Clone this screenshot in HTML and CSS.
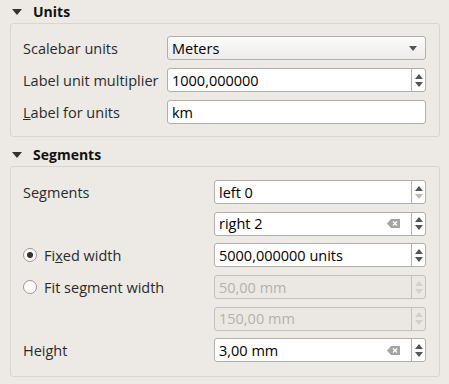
FILE: index.html
```html
<!DOCTYPE html>
<html lang="en">
<head>
<meta charset="UTF-8">
<title>Scalebar properties</title>
<link rel="stylesheet" href="styles.css">
</head>
<body>

<div class="section">
    <div class="sec-head"><span class="tri"></span>Units</div>
    <div class="box units">
        <div class="lbl">Scalebar units</div>
        <div class="field combo"><span class="val">Meters</span><span class="drop"></span></div>

        <div class="lbl">Label unit multiplier</div>
        <div class="field spin"><span class="val">1000,000000</span>
            <span class="arrows"><i class="up"></i><i class="down"></i></span></div>

        <div class="lbl"><u>L</u>abel for units</div>
        <div class="field"><span class="val">km</span></div>
    </div>
</div>

<div class="section">
    <div class="sec-head"><span class="tri"></span>Segments</div>
    <div class="box segs">
        <div class="lbl">Segments</div>
        <div class="field spin"><span class="val">left 0</span>
            <span class="arrows"><i class="up"></i><i class="down off"></i></span></div>

        <div class="lbl"></div>
        <div class="field spin"><span class="val">right 2</span>
            <svg class="clear" width="13" height="11" viewBox="0 0 13 11"><path d="M0 5.5 L4 1 H13 V10 H4 Z" fill="#a4a4a4"/><path d="M6 3.5 L10 7.5 M10 3.5 L6 7.5" stroke="#fff" stroke-width="1.3"/></svg>
            <span class="arrows"><i class="up"></i><i class="down"></i></span></div>

        <div class="lbl"><span class="radio on"></span>Fi<u>x</u>ed width</div>
        <div class="field spin"><span class="val">5000,000000 units</span>
            <span class="arrows"><i class="up"></i><i class="down"></i></span></div>

        <div class="lbl"><span class="radio"></span>Fit segment width</div>
        <div class="field spin disabled"><span class="val">50,00 mm</span>
            <span class="arrows"><i class="up"></i><i class="down"></i></span></div>

        <div class="lbl"></div>
        <div class="field spin disabled"><span class="val">150,00 mm</span>
            <span class="arrows"><i class="up"></i><i class="down"></i></span></div>

        <div class="lbl">Height</div>
        <div class="field spin"><span class="val">3,00 mm</span>
            <svg class="clear" width="13" height="11" viewBox="0 0 13 11"><path d="M0 5.5 L4 1 H13 V10 H4 Z" fill="#a4a4a4"/><path d="M6 3.5 L10 7.5 M10 3.5 L6 7.5" stroke="#fff" stroke-width="1.3"/></svg>
            <span class="arrows"><i class="up"></i><i class="down"></i></span></div>
    </div>
</div>

</body>
</html>
```

FILE: styles.css
```css
body {
    margin: 0;
    background-color: #edeae6;
    font-family: "Open Sans", "Liberation Sans", sans-serif;
    font-size: 14.5px;
    color: #2a2a2a;
}

.section {
    margin-bottom: 6px;
}

.sec-head {
    height: 23px;
    display: flex;
    align-items: center;
    font-size: 14px;
    font-weight: bold;
    color: #111;
}

.tri {
    width: 0;
    height: 0;
    margin: 0 11px 0 12px;
    border-left: 5px solid transparent;
    border-right: 5px solid transparent;
    border-top: 6px solid #333;
}

.box {
    margin-left: 10px;
    width: 430px;
    box-sizing: border-box;
    border: 1px solid #d9d5d0;
    border-radius: 3px;
    display: grid;
    row-gap: 8px;
    align-items: center;
}

.units {
    padding: 12px 13px 12px 12px;
    grid-template-columns: 144px 1fr;
}

.segs {
    padding: 13px 13px 14px 12px;
    grid-template-columns: 191px 1fr;
    row-gap: 7.7px;
}

.lbl {
    display: flex;
    align-items: center;
    height: 24px;
    white-space: nowrap;
}

.field {
    height: 24px;
    box-sizing: border-box;
    border: 1px solid #b3afaa;
    border-radius: 3px;
    background-color: #fff;
    display: flex;
    align-items: center;
    color: #000;
}

.val {
    flex: 1;
    padding-left: 4px;
}

.combo {
    background: linear-gradient(#fbfbfa, #eeecea);
}

.drop {
    width: 0;
    height: 0;
    margin-right: 8px;
    border-left: 4px solid transparent;
    border-right: 4px solid transparent;
    border-top: 5px solid #555;
}

.clear {
    margin-right: 11px;
}

.arrows {
    width: 13px;
    height: 100%;
    border-left: 1px solid #b3afaa;
    display: flex;
    flex-direction: column;
    align-items: center;
    justify-content: center;
    gap: 3px;
}

.arrows i {
    width: 0;
    height: 0;
    border-left: 4px solid transparent;
    border-right: 4px solid transparent;
}

.arrows .up {
    border-bottom: 5px solid #555;
}

.arrows .down {
    border-top: 5px solid #555;
}

.arrows .off {
    border-top-color: #bdbab6;
}

.disabled {
    background-color: #ebe8e4;
    border-color: #c4c0bb;
    color: #b5b1ac;
}

.disabled .arrows {
    border-left-color: #c4c0bb;
}

.disabled .arrows .up {
    border-bottom-color: #d3d0cc;
}

.disabled .arrows .down {
    border-top-color: #d3d0cc;
}

.radio {
    width: 12px;
    height: 12px;
    border: 1px solid #9b9894;
    border-radius: 50%;
    background-color: #fff;
    margin-right: 7px;
    display: flex;
    align-items: center;
    justify-content: center;
}

.radio.on::after {
    content: "";
    width: 6px;
    height: 6px;
    border-radius: 50%;
    background-color: #333;
}
```
